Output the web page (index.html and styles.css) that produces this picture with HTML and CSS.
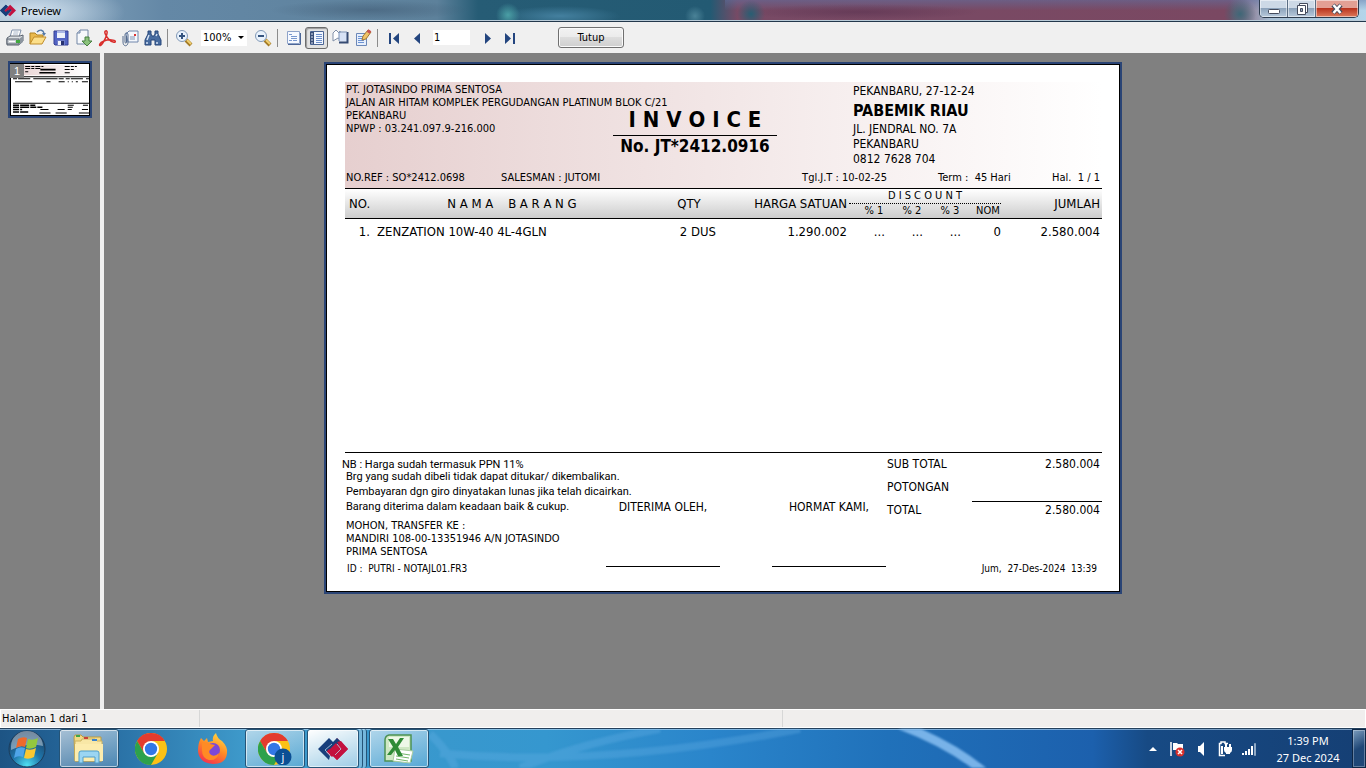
FILE: index.html
```
<!DOCTYPE html>
<html lang="id">
  <head>
    <meta charset="UTF-8" />
    <meta name="viewport" content="width=device-width, initial-scale=1.0" />
    <title>Preview</title>
    <link rel="stylesheet" href="styles.css">
  </head>
  <body>
    <header class="titlebar">
      <svg class="titlebar-logo" width="16" height="13" viewBox="0 0 30 24">
        <path d="M0 12 11 1l4 4-7 7 3 3 8-8 4 4-12 12z" fill="#173f7c" />
        <path d="M30 12 19 23l-4-3 7-8-3-3-8 8-4-4L19 1z" fill="#c3113f" />
        <path d="M11 1l4 4-7 7 3 3 4-4 3 3-7 9L0 12z" fill="#173f7c" />
      </svg>
      <h1 class="titlebar-text">Preview</h1>
      <div class="window-controls">
        <button class="win-btn" aria-label="Minimize">
          <svg width="14" height="12" viewBox="0 0 14 12"><rect x="1.500" y="6.500" width="11" height="4" rx="1" fill="#fff" stroke="#444b5c" /></svg>
        </button>
        <button class="win-btn" aria-label="Restore">
          <svg width="14" height="14" viewBox="0 0 14 14"><path d="M4.500 1.500h8v9h-8z" fill="#fff" stroke="#444b5c" /><path d="M2.500 3.500h8v9h-8z" fill="#fff" stroke="#444b5c" /><path d="M5.500 6.500h2v3h-2z" fill="#8fa5c0" stroke="#444b5c" /></svg>
        </button>
        <button class="win-btn win-close" aria-label="Close">
          <svg width="14" height="12" viewBox="0 0 14 12"><path d="M3 2l8 8M11 2l-8 8" stroke="#444b5c" stroke-width="4.500" /><path d="M3.500 2l7 8M10.500 2l-7 8" stroke="#fff" stroke-width="2.500" /></svg>
        </button>
      </div>
    </header>

    <nav class="toolbar">
      <button class="tool" aria-label="Print">
        <svg width="18" height="18" viewBox="0 0 18 18"><path d="M6 1h9l-2 7H4z" fill="#fff" stroke="#7e8fa8" /><path d="M7.500 3h5M7 5h5" stroke="#a9b6c9" /><path d="M1 9l3-2h10l3-1v6l-4 4H1z" fill="#dce0e4" stroke="#58616d" /><path d="M1 10h12v5H1z" fill="#c8cdd3" stroke="#58616d" /><path d="M13 10l4-3v6l-4 3z" fill="#8c959f" /><path d="M3 12.500h6" stroke="#fff" /><rect x="10" y="11" width="4" height="3" fill="#41a83e" /></svg>
      </button>
      <button class="tool" aria-label="Open">
        <svg width="18" height="18" viewBox="0 0 18 18"><path d="M1 15V4h5l2 2h6v4" fill="#e9b94d" stroke="#b18424" /><path d="M1 15l4-7h12l-4 7z" fill="#fcdf8a" stroke="#c08c2a" /><path d="M8 3c3-3 6-2 7 1" fill="none" stroke="#5178a6" stroke-width="1.300" /><path d="M13 4h4l-2 3z" fill="#5178a6" /></svg>
      </button>
      <button class="tool" aria-label="Save">
        <svg width="18" height="18" viewBox="0 0 18 18"><path d="M2 2h14v14H3l-1-1z" fill="#5264c4" stroke="#343f94" /><path d="M5 2h8v7H5z" fill="#eef2fb" /><path d="M5 2h8v2H5z" fill="#aab7e5" /><path d="M5 11h8v5H5z" fill="#6f7ec9" /><path d="M9 12h3v4H9z" fill="#26306f" /><path d="M6 12h3v4H6z" fill="#f2f4fb" /></svg>
      </button>
      <button class="tool" aria-label="Export">
        <svg width="18" height="18" viewBox="0 0 18 18"><path d="M2 4l3-3h8v14H2z" fill="#f7f9fc" stroke="#7387a5" /><path d="M2 4h3V1" fill="#ccd6e5" stroke="#7387a5" /><path d="M10 8h4v4h3l-5 5-5-5h3z" fill="#8bc27c" stroke="#477f41" /></svg>
      </button>
      <button class="tool" aria-label="Export to PDF">
        <svg width="18" height="18" viewBox="0 0 18 18"><path d="M7.500 2c-2 1 1 6 4 9 2 2 6 3 6 1.500S11 10 6 12s-5 5-3.500 4.500C5 15 10 5 9 2.500 8.600 1.600 8 1.600 7.500 2z" fill="none" stroke="#d92d2b" stroke-width="1.500" /></svg>
      </button>
      <button class="tool" aria-label="Send by e-mail">
        <svg width="18" height="18" viewBox="0 0 18 18"><path d="M5 5l3-3h9v11H7z" fill="#f4f7fc" stroke="#7086ac" /><rect x="13" y="5" width="2" height="2" fill="#d33" /><path d="M9 8h5M9 10h5" stroke="#8495b4" /><path d="M2 7v6c0 5 5 5 5 0V6c0-3-3-3-3 0v7c0 1.500 1.500 1.500 1.500 0V7" fill="none" stroke="#566d8f" /></svg>
      </button>
      <button class="tool" aria-label="Find">
        <svg width="18" height="18" viewBox="0 0 18 18"><path d="M4 2h3v3l1 2h2l1-2V2h3v3l3 6v5h-6v-5H7v5H1v-5l3-6z" fill="#476b9f" stroke="#27477a" /><path d="M3 11l2-5M12 7l1-2M3 13v2M13 13v2" stroke="#d4e2f5" stroke-width="1.500" /></svg>
      </button>
      <span class="separator"></span>
      <button class="tool" aria-label="Zoom in">
        <svg width="18" height="18" viewBox="0 0 18 18"><path d="M11 11l5 5" stroke="#a37a24" stroke-width="4" /><path d="M12 11l4 4" stroke="#f0cf72" stroke-width="2" /><circle cx="7" cy="7" r="5.500" fill="#e9f2fc" stroke="#8199b7" /><path d="M4 7h6M7 4v6" stroke="#35547f" stroke-width="2" /></svg>
      </button>
      <label class="zoom">
        <select class="zoom-select" aria-label="Zoom">
          <option>100%</option>
        </select>
      </label>
      <button class="tool" aria-label="Zoom out">
        <svg width="18" height="18" viewBox="0 0 18 18"><path d="M11 11l5 5" stroke="#a37a24" stroke-width="4" /><path d="M12 11l4 4" stroke="#f0cf72" stroke-width="2" /><circle cx="7" cy="7" r="5.500" fill="#e9f2fc" stroke="#8199b7" /><path d="M4 7h6" stroke="#35547f" stroke-width="2" /></svg>
      </button>
      <span class="separator"></span>
      <button class="tool" aria-label="Outline">
        <svg width="18" height="18" viewBox="0 0 18 18"><path d="M2.500 2.500h12v12h-12z" fill="#f6f9ff" stroke="#8ea3c9" /><path d="M3 15.500h12.500V4" fill="none" stroke="#4c6697" /><path d="M4 5.500h3M6 7.500h6M6 9.500h6M4 11.500h3M8 11.500h4" stroke="#7898cf" /></svg>
      </button>
      <button class="tool tool-pressed" aria-label="Thumbnails">
        <svg width="18" height="18" viewBox="0 0 18 18"><path d="M2.500 2.500h13v13h-13z" fill="#f3f7ff" stroke="#4b6594" /><path d="M2 3h4v12H2z" fill="#3a4f78" /><path d="M3 5h2M3 8h2M3 11h2M3 14h2" stroke="#dce6f6" /><path d="M8 5.500h6M8 7.500h6M8 9.500h6M8 11.500h6M8 13.500h6" stroke="#6e90cb" /></svg>
      </button>
      <button class="tool" aria-label="Page settings">
        <svg width="18" height="18" viewBox="0 0 18 18"><path d="M2 12V4l3-3 3 3 1-2v8L7 9z" fill="#fff" stroke="#8190a8" /><path d="M8 3.500h8v9H8z" fill="#d7e2f6" /><path d="M8 13.500h8.500V3" fill="none" stroke="#364b73" stroke-width="2" /><path d="M8 12V3h8" fill="none" stroke="#7b92b8" /></svg>
      </button>
      <button class="tool" aria-label="Edit page">
        <svg width="18" height="18" viewBox="0 0 18 18"><path d="M2.500 4.500h10v12h-10z" fill="#e7effc" stroke="#6c88b8" /><path d="M4 7.500h6M4 9.500h6M4 11.500h6M4 13.500h6" stroke="#6c93d4" /><path d="M8 11l1-4 5-6 3 2-5 7z" fill="#efc368" stroke="#a47831" /><path d="M13.500 1.500l3 2" stroke="#c75252" stroke-width="3" /></svg>
      </button>
      <span class="separator"></span>
      <button class="tool" aria-label="First page">
        <svg width="18" height="18" viewBox="0 0 18 18"><path d="M4 4h2v11H4zM14 4v11L8 9.500z" fill="#23457f" /></svg>
      </button>
      <button class="tool" aria-label="Previous page">
        <svg width="18" height="18" viewBox="0 0 18 18"><path d="M12 4v11L6 9.500z" fill="#23457f" /></svg>
      </button>
      <input class="page-input" type="text" value="1" aria-label="Page" />
      <button class="tool" aria-label="Next page">
        <svg width="18" height="18" viewBox="0 0 18 18"><path d="M6 4v11l6-5.500z" fill="#23457f" /></svg>
      </button>
      <button class="tool" aria-label="Last page">
        <svg width="18" height="18" viewBox="0 0 18 18"><path d="M3 4v11l6-5.500zM11 4h2v11h-2z" fill="#23457f" /></svg>
      </button>
      <button class="close-preview">Tutup</button>
    </nav>

    <main class="workspace">
      <aside class="thumbs">
        <div class="thumb">
          <svg class="thumb-page" viewBox="0 0 77 50" preserveAspectRatio="none">
            <defs><linearGradient id="tint"><stop stop-color="#e6d0d0" /><stop offset="1" stop-color="#fff" /></linearGradient></defs>
            <rect width="77" height="50" fill="#fff" />
            <rect x="2" y="1" width="73" height="10" fill="url(#tint)" />
            <path d="M2 12.500h75M2 38.500h75" stroke="#000" stroke-width="1" />
            <path d="M2 14.500h75" stroke="#000" stroke-dasharray="4 1 12 3 24 1 5 2" />
            <path d="M4 17.500h17M35 17.500h4M47 17.500h6M56 17.500h1M60 17.500h1M64 17.500h2M70 17.500h6" stroke="#000" />
            <path d="M14 2.500h18M14 4.500h16M14 7.500h3M53 2.500h12M53 5.500h9M53 8.500h5" stroke="#000" stroke-dasharray="5 1 3 1" />
            <path d="M29 5.500h15M28 8.500h16" stroke="#000" stroke-width="1.500" />
            <path d="M2 40.500h22M2 42.500h29M2 44.500h9M2 47h15" stroke="#000" stroke-width="1.500" stroke-dasharray="6 1 9 1" />
            <path d="M56 40.500h6M71 40.500h5M56 42.500h5M46 44.500h7M29 44.500h8M56 44.500h4M70 44.500h6M28 48h11M44 48h11M67 48h10" stroke="#000" />
          </svg>
          <span class="thumb-number">1</span>
        </div>
      </aside>
      <div class="splitter"></div>

      <section class="canvas">
        <article class="paper">
          <header class="inv-head">
            <div class="inv-top">
              <address class="company">
                PT. JOTASINDO PRIMA SENTOSA<br>
                JALAN AIR HITAM KOMPLEK PERGUDANGAN PLATINUM BLOK C/21<br>
                PEKANBARU<br>
                NPWP : 03.241.097.9-216.000
              </address>
              <div class="inv-title">
                <h2 class="inv-name">I N V O I C E</h2>
                <p class="inv-number">No. JT*2412.0916</p>
              </div>
              <div class="customer">
                <p class="customer-date">PEKANBARU, 27-12-24</p>
                <p class="customer-name">PABEMIK RIAU</p>
                <p>JL. JENDRAL NO. 7A</p>
                <p>PEKANBARU</p>
                <p>0812 7628 704</p>
              </div>
            </div>
            <div class="inv-meta">
              <span class="meta-ref">NO.REF : SO*2412.0698</span>
              <span class="meta-sales">SALESMAN : JUTOMI</span>
              <span class="meta-due">Tgl.J.T : 10-02-25</span>
              <span class="meta-term">Term :&nbsp; 45 Hari</span>
              <span>Hal.&nbsp; 1 / 1</span>
            </div>
          </header>

          <table class="items">
            <colgroup>
              <col class="c-no"><col><col class="c-qty"><col class="c-price">
              <col class="c-disc"><col class="c-disc"><col class="c-disc"><col class="c-disc">
              <col class="c-total">
            </colgroup>
            <thead>
              <tr>
                <th rowspan="2" class="left">NO.</th>
                <th rowspan="2">N A M A&nbsp;&nbsp;&nbsp; B A R A N G</th>
                <th rowspan="2">QTY</th>
                <th rowspan="2" class="right">HARGA SATUAN</th>
                <th colspan="4" class="disc-title">D I S C O U N T</th>
                <th rowspan="2" class="right">JUMLAH</th>
              </tr>
              <tr class="disc-row">
                <th>% 1</th>
                <th>% 2</th>
                <th>% 3</th>
                <th>NOM</th>
              </tr>
            </thead>
            <tbody>
              <tr>
                <td class="right">1.</td>
                <td class="item-name">ZENZATION 10W-40 4L-4GLN</td>
                <td class="item-qty">2 DUS</td>
                <td class="right">1.290.002</td>
                <td class="right">...</td>
                <td class="right">...</td>
                <td class="right">...</td>
                <td class="item-nom">0</td>
                <td class="right">2.580.004</td>
              </tr>
            </tbody>
          </table>

          <footer class="inv-foot">
            <div class="foot-grid">
              <div class="notes">
                <p class="note note-nb">NB : Harga sudah termasuk PPN 11%</p>
                <p class="note">Brg yang sudah dibeli tidak dapat ditukar/ dikembalikan.</p>
                <p class="note note-gap">Pembayaran dgn giro dinyatakan lunas jika telah dicairkan.</p>
                <p class="note note-gap">Barang diterima dalam keadaan baik &amp; cukup.</p>
                <p class="transfer">MOHON, TRANSFER KE :<br>MANDIRI 108-00-13351946 A/N JOTASINDO<br>PRIMA SENTOSA</p>
              </div>
              <div class="sign">DITERIMA OLEH,</div>
              <div class="sign">HORMAT KAMI,</div>
              <dl class="totals">
                <div class="total-row"><dt>SUB TOTAL</dt><dd>2.580.004</dd></div>
                <div class="total-row"><dt>POTONGAN</dt><dd></dd></div>
                <div class="total-row"><dt>TOTAL</dt><dd class="grand">2.580.004</dd></div>
              </dl>
            </div>
            <div class="stamp">
              <span>ID :&nbsp; PUTRI - NOTAJL01.FR3</span>
              <span>Jum,&nbsp; 27-Des-2024&nbsp; 13:39</span>
            </div>
          </footer>
        </article>
      </section>
    </main>

    <div class="statusbar">
      <span class="status-page">Halaman 1 dari 1</span>
      <span class="status-mid"></span>
    </div>

    <footer class="taskbar">
      <svg class="taskbar-glow" viewBox="0 0 1366 40" preserveAspectRatio="none">
        <path d="M900-4Q950 15 984 44" fill="none" stroke="#8fc4f5" stroke-width="9" opacity=".8" />
        <path d="M430 5Q450 25 455 40M520 40Q580 15 660 0M440 25Q600 40 800 0" fill="none" stroke="#6ab4e8" stroke-width="8" opacity=".3" />
      </svg>
      <button class="start" aria-label="Start">
        <svg width="38" height="38" viewBox="0 0 38 38">
          <defs>
            <radialGradient id="orb" cx=".5" cy=".95" r=".9"><stop stop-color="#4fe0f2" /><stop offset=".45" stop-color="#1f76ab" /><stop offset="1" stop-color="#1c3f63" /></radialGradient>
          </defs>
          <circle cx="19" cy="19" r="18" fill="url(#orb)" stroke="#1c3c5a" />
          <path d="M3 16a16 15 0 0 1 32 0Q19 12 3 20z" fill="#fff" opacity=".4" />
          <path d="M10 9q5-3 9-1l-2 9q-5-2-9 1z" fill="#ee6a2c" />
          <path d="M20 9q5 2 10-1l-2 9q-6 3-10 1z" fill="#93c83e" />
          <path d="M8 19q4-3 9-1l-2 9q-5-2-9 1z" fill="#4fa5e8" />
          <path d="M18 19q5 2 10-1l-2 9q-5 3-10 1z" fill="#fbc832" />
        </svg>
      </button>
      <button class="task task-open" aria-label="Windows Explorer">
        <svg width="34" height="32" viewBox="0 0 34 32">
          <path d="M2 4l1-2h6l2 2h18v24H3z" fill="#f2d985" stroke="#b89a45" />
          <path d="M4 3h4" stroke="#3fa549" stroke-width="2" /><path d="M10 6h13l2 2h5v20H3V8h6z" fill="#f8e7a6" stroke="#cbb261" />
          <path d="M12 5h4" stroke="#c84238" stroke-width="2" /><path d="M20 7h5" stroke="#3b83cd" stroke-width="2" />
          <path d="M3 11h28v17H3z" fill="#fcecae" />
          <path d="M7 30V20q0-2 2-2h16q2 0 2 2v10h-4v-6H11v6z" fill="#9bd5f2" stroke="#4e9dca" />
        </svg>
      </button>
      <button class="task" aria-label="Chrome">
        <svg width="32" height="32" viewBox="0 0 32 32">
          <circle cx="16" cy="16" r="16" fill="#fbc116" />
          <path d="M2.140 8A16 16 0 0 1 29.860 8H16l-6.930 12z" fill="#e33b2e" />
          <path d="M2.140 8A16 16 0 0 0 16 32l6.930-12-6.930 4-6.930-4z" fill="#2da14c" />
          <circle cx="16" cy="16" r="8" fill="#fff" /><circle cx="16" cy="16" r="6.200" fill="#3277e6" />
        </svg>
      </button>
      <button class="task" aria-label="Firefox">
        <svg width="32" height="32" viewBox="0 0 32 32">
          <defs><linearGradient id="fox" x1=".8" y1="0" x2=".3" y2="1"><stop stop-color="#ffde45" /><stop offset=".5" stop-color="#ff8a25" /><stop offset="1" stop-color="#f5314f" /></linearGradient></defs>
          <path d="M4 5l3 3 3-3 1 4 5-1q-1-5 3-8 1 5 6 8 6 6 5 12-1 11-14 11Q2 30 1 18q0-8 3-13z" fill="url(#fox)" />
          <circle cx="16" cy="17" r="7" fill="#7b48d8" />
          <path d="M5 10q6-2 8 1l5 1-4 4q-3 2-1 5 4 4 9-1-2 8-10 7-7-2-7-10z" fill="#ff8b25" />
        </svg>
      </button>
      <button class="task task-open" aria-label="Chrome, profile j">
        <svg width="34" height="32" viewBox="0 0 34 32">
          <circle cx="16" cy="16" r="16" fill="#fbc116" />
          <path d="M2.140 8A16 16 0 0 1 29.860 8H16l-6.930 12z" fill="#e33b2e" />
          <path d="M2.140 8A16 16 0 0 0 16 32l6.930-12-6.930 4-6.930-4z" fill="#2da14c" />
          <circle cx="16" cy="16" r="8" fill="#fff" /><circle cx="16" cy="16" r="6.200" fill="#3277e6" />
          <circle cx="25" cy="24" r="8.500" fill="#0b4f94" />
          <text x="25" y="28" class="profile-letter">j</text>
        </svg>
      </button>
      <button class="task task-active" aria-label="Preview">
        <svg width="30" height="24" viewBox="0 0 30 24">
          <path d="M30 12 19 23l-4-4-4-1-4-4 8-7 4-6z" fill="#c3113f" />
          <path d="M0 12 11 1l4 4 4-4 4 4-9 9-3-2-3 3 4 4-1 4z" fill="#173f7c" />
          <path d="M19 5l4-1 7 8-11 11-4-4-1 1-5-5 9-9 4 4-5 5 2 2 5-5z" fill="#c3113f" />
          <path d="M14 7l-7 6 5 5M19 7l4 5-6 6" fill="none" stroke="#b9d6ea" stroke-width=".8" />
        </svg>
      </button>
      <span class="task-stack"></span>
      <span class="task-stack"></span>
      <button class="task task-open" aria-label="Excel">
        <svg width="32" height="32" viewBox="0 0 32 32">
          <path d="M6 2h22v26H2V7q0-4 4-5z" fill="#cfe8c4" stroke="#4c9153" stroke-width="1.500" />
          <path d="M6 4h20v10H6z" fill="#eef8e8" />
          <path d="M12 16l18 2-3 12-17-2z" fill="#fff" stroke="#a9cf9f" /><path d="M14 20l13 2M13 23l13 2M13 26l12 2" stroke="#73b56a" />
          <path d="M5 6h5l3 5 4-6h4l-6 9 5 9h-5l-3-6-4 5H4l6-8z" fill="#2f8b36" />
        </svg>
      </button>
      <div class="tray">
        <button class="tray-btn" aria-label="Show hidden icons"><svg width="16" height="16" viewBox="0 0 16 16"><path d="M4 10l4-4 4 4z" fill="#fff" /></svg></button>
        <button class="tray-btn" aria-label="Action Center"><svg width="16" height="16" viewBox="0 0 16 16"><path d="M2 1v14" stroke="#fff" stroke-width="1.500" /><path d="M4 2h4l1 1h5v7H9L8 9H4z" fill="#fff" /><circle cx="11" cy="11" r="4.500" fill="#d9302c" /><path d="M9 9l4 4M13 9l-4 4" stroke="#fff" stroke-width="1.500" /></svg></button>
        <button class="tray-btn" aria-label="Volume"><svg width="16" height="16" viewBox="0 0 16 16"><path d="M5 5h2l4-4v14l-4-4H5z" fill="#fff" /></svg></button>
        <button class="tray-btn" aria-label="Power"><svg width="16" height="16" viewBox="0 0 16 16"><path d="M8 14.500H2.500V2.500H4V1h4v1.500h3" fill="none" stroke="#fff" stroke-width="1.500" /><path d="M4 5h2v8H4z" fill="#fff" /><path d="M7 6h8v3q0 2-2 3v1h-4v-1q-2-1-2-3zM8 3h2v3H8zM12 3h2v3h-2z" fill="#fff" /></svg></button>
        <button class="tray-btn" aria-label="Network"><svg width="16" height="16" viewBox="0 0 16 16"><path d="M1 12h2v2H1zM4 10h2v4H4zM7 8h2v6H7zM10 5h2v9h-2z" fill="#fff" /><path d="M13.500 2.500h1v12h-1z" fill="none" stroke="#90a9c5" /></svg></button>
      </div>
      <time class="clock">1:39 PM<br>27 Dec 2024</time>
      <button class="show-desktop" aria-label="Show desktop"></button>
    </footer>
  </body>
</html>
```

FILE: styles.css
```
* {
  margin: 0;
  padding: 0;
  box-sizing: border-box;
}

body {
  height: 100vh;
  display: flex;
  flex-direction: column;
  overflow: hidden;
  font-family: "DejaVu Sans Condensed", "Noto Sans", sans-serif;
  font-size: 11px;
  color: #000;
  background: #808080;
}

button {
  border: none;
  background: none;
  font: inherit;
  display: flex;
  align-items: center;
  justify-content: center;
}

/* title bar */
.titlebar {
  height: 22px;
  flex: none;
  display: flex;
  align-items: center;
  border-bottom: 1px solid #23384c;
  box-shadow: inset 0 -1px #b9cbd8;
  background:
    radial-gradient(ellipse 90px 30px at 35px 12px, #d3e2ef, transparent),
    radial-gradient(ellipse 100px 10px at 370px 10px, rgba(60, 85, 110, 0.5), transparent),
    radial-gradient(circle 12px at 508px 15px, #4a9fa5, transparent),
    radial-gradient(ellipse 60px 10px at 560px 16px, #44809f, transparent),
    radial-gradient(circle 10px at 695px 16px, #4a8297, transparent),
    radial-gradient(circle 14px at 751px 14px, #285e73, transparent),
    radial-gradient(ellipse 120px 8px at 860px 12px, rgba(90, 50, 80, 0.6), transparent),
    radial-gradient(circle 16px at 1240px 14px, #3e6777, transparent),
    linear-gradient(to bottom, rgba(95, 115, 165, 0.5), transparent 50%) 725px 0 no-repeat,
    linear-gradient(to right, #8fadc6, #6488a6 12%, #5d819b 32%, #265c75 35%, #235a73 52%, #784a65 54%, #7a4862 90%, #a5bdd3 93%, #b3d5ea);
}

.titlebar-logo {
  flex: none;
}

.titlebar-text {
  flex: 1;
  padding-left: 5px;
  font-family: "Noto Sans", sans-serif;
  font-size: 11px;
  font-weight: normal;
}

.window-controls {
  display: flex;
  align-self: flex-start;
  margin-right: 7px;
  border: 1px solid #2d3c4e;
  border-top: none;
  border-radius: 0 0 5px 5px;
  overflow: hidden;
}

.win-btn {
  width: 28px;
  height: 17px;
  border-right: 1px solid #5a6d83;
  box-shadow: inset 0 0 0 1px rgba(255, 255, 255, 0.5);
  background: linear-gradient(#cdd9e6 45%, #8da3bb 50%, #b8cadc);
}

.win-close {
  width: 42px;
  border-right: none;
  background: linear-gradient(#e3a094 45%, #b9351f 50%, #dd7a5c);
}

/* toolbar */
.toolbar {
  height: 31px;
  flex: none;
  display: flex;
  align-items: center;
  padding-left: 3px;
  background: #f0f0f0;
}

.tool {
  width: 23px;
  height: 22px;
  flex: none;
}

.tool-pressed {
  border: 1px solid #6c6c6c;
  border-radius: 3px;
  background: #e2e2e2;
  box-shadow: inset 1px 1px 1px #999;
}

.separator {
  width: 1px;
  height: 18px;
  margin: 0 4px 0 3px;
  background: #8c8c8c;
}

.zoom {
  position: relative;
  margin: 0 4px 0 6px;
}

.zoom::after {
  content: "";
  position: absolute;
  right: 3px;
  top: 6px;
  border: 3px solid transparent;
  border-top-color: #000;
  pointer-events: none;
}

.zoom-select {
  display: block;
  width: 46px;
  height: 16px;
  padding-left: 2px;
  border: none;
  appearance: none;
  background: #fff;
  font: inherit;
}

.page-input {
  width: 37px;
  height: 15px;
  margin: 0 6px 0 5px;
  padding-left: 1px;
  border: none;
  background: #fff;
  font: inherit;
}

.close-preview {
  width: 66px;
  height: 21px;
  margin-left: 36px;
  border: 1px solid #707070;
  border-radius: 3px;
  background: linear-gradient(#f2f2f2, #ebebeb 49%, #dddddd 50%, #cfcfcf);
  box-shadow: inset 0 0 0 1px #fafafa;
}

/* preview area */
.workspace {
  flex: 1;
  display: flex;
  min-height: 0;
}

.thumbs {
  width: 100px;
  padding: 8px;
}

.thumb {
  position: relative;
  height: 57px;
  border: 2px solid #2a4475;
}

.thumb-page {
  display: block;
  width: 100%;
  height: 100%;
  border: 1px solid #000;
}

.thumb-number {
  position: absolute;
  left: 0;
  top: 1px;
  width: 14px;
  background: #808080;
  color: #fff;
  font: 11px/14px "Liberation Sans", Arial, sans-serif;
  text-align: center;
}

.splitter {
  width: 4px;
  background: #f0f0f0;
}

.canvas {
  flex: 1;
  padding: 9px 24px 0 0;
  overflow: hidden;
}

.paper {
  width: 798px;
  min-height: 532px;
  margin: 0 auto;
  padding: 18px 18px 0 19px;
  border: 2px solid #2a4475;
  outline: 1px solid #000;
  outline-offset: -3px;
  background: #fff;
  display: flex;
  flex-direction: column;
}

/* invoice heading */
.inv-head {
  height: 107px;
  display: flex;
  flex-direction: column;
  justify-content: space-between;
  border-bottom: 1px solid #000;
  background: linear-gradient(to right, #e6cfcf, #fff);
}

.inv-top {
  display: flex;
}

.company {
  width: 268px;
  padding: 1px 0 0 1px;
  font-style: normal;
  line-height: 13px;
  white-space: nowrap;
}

.inv-title {
  width: 164px;
  padding-top: 25px;
  text-align: center;
}

.inv-name {
  padding-bottom: 2px;
  border-bottom: 1px solid #000;
  font-size: 22px;
  line-height: 26px;
}

.inv-number {
  font-size: 17px;
  font-weight: bold;
  line-height: 20px;
}

.customer {
  padding-left: 76px;
  font-size: 12px;
  line-height: 15px;
}

.customer-date {
  padding-top: 2px;
}

.customer-name {
  padding-top: 1px;
  font-size: 16px;
  font-weight: bold;
  line-height: 22px;
}

.inv-meta {
  display: flex;
  padding: 0 2px 3px 1px;
  line-height: 14px;
}

.meta-ref {
  width: 155px;
}

.meta-sales {
  flex: 1;
}

.meta-due {
  width: 136px;
}

.meta-term {
  width: 114px;
}

/* items */
.items {
  width: 100%;
  table-layout: fixed;
  border-spacing: 0;
  font-size: 13px;
}

.c-no { width: 27px; }
.c-qty { width: 74px; }
.c-price { width: 123px; }
.c-disc { width: 38px; }
.c-total { width: 101px; }

.items thead {
  background: linear-gradient(#fff, #cbcbcb);
}

.items th {
  height: 15px;
  border-bottom: 1px solid #000;
  font-weight: normal;
  line-height: 14px;
  white-space: nowrap;
}

.items .left {
  padding-left: 4px;
  text-align: left;
}

.items .right {
  padding-right: 2px;
  text-align: right;
}

.items .disc-title {
  border-bottom: 1px dotted #000;
  font-size: 11px;
}

.items .disc-row th {
  padding-left: 12px;
  font-size: 11px;
}

.items td {
  height: 25px;
}

.item-name {
  padding-left: 5px;
}

.item-qty {
  padding-right: 10px;
  text-align: right;
}

.item-nom {
  text-align: right;
}

/* invoice footer */
.inv-foot {
  margin-top: auto;
  padding-bottom: 17px;
  border-top: 1px solid #000;
}

.foot-grid {
  display: flex;
  gap: 52px;
  height: 114px;
}

.notes {
  width: 209px;
  padding: 6px 0 0 1px;
  line-height: 12px;
  white-space: nowrap;
}

.note {
  font-family: Roboto, sans-serif;
}

.note-nb {
  margin-left: -4px;
}

.note-gap {
  padding-top: 3px;
}

.transfer {
  padding-top: 6px;
  line-height: 13px;
}

.sign {
  width: 114px;
  padding-top: 46px;
  border-bottom: 1px solid #000;
  font-size: 12px;
  line-height: 16px;
  text-align: center;
  white-space: nowrap;
}

.totals {
  flex: 1;
  margin-left: -51px;
  font-size: 12px;
}

.total-row {
  display: flex;
  justify-content: space-between;
  line-height: 23px;
}

.total-row dd {
  width: 130px;
  padding-right: 2px;
  text-align: right;
}

.total-row .grand {
  margin-top: 2px;
  border-top: 1px solid #000;
  line-height: 17px;
}

.stamp {
  display: flex;
  justify-content: space-between;
  margin-top: -4px;
  padding: 0 5px 0 2px;
  font-size: 10px;
  line-height: 12px;
}

/* status bar */
.statusbar {
  height: 19px;
  flex: none;
  display: flex;
  border: 1px solid #fff;
  background: #f0eeed;
  line-height: 18px;
}

.status-page {
  width: 199px;
  padding-left: 1px;
  border-right: 1px solid #d7d7d7;
}

.status-mid {
  width: 583px;
  border-right: 1px solid #d7d7d7;
}

/* taskbar */
.taskbar {
  position: relative;
  height: 40px;
  flex: none;
  display: flex;
  align-items: stretch;
  border-top: 1px solid #24405c;
  box-shadow: inset 0 1px rgba(190, 220, 245, 0.6);
  background: linear-gradient(to right, #1d5484, #276ba0 7%, #3e9acb 18%, #3597cf 40%, #2a85cb 52%, #2071ba 65%, #1c60ad 80%, #174a84 84%, #153f74);
}

.taskbar-glow {
  position: absolute;
  width: 100%;
  height: 100%;
  filter: blur(1px);
}

.taskbar button {
  position: relative;
}

.start {
  width: 54px;
  margin-right: 5px;
}

.task {
  width: 60px;
  margin-right: 2px;
}

.task-open,
.task-active {
  border: 1px solid #255477;
  border-radius: 3px;
  box-shadow: inset 0 0 0 1px rgba(255, 255, 255, 0.6);
  background: linear-gradient(160deg, rgba(255, 255, 255, 0.6), rgba(255, 255, 255, 0.15));
}

.task-active {
  width: 52px;
  margin-right: 0;
  background: linear-gradient(160deg, #fff, rgba(255, 255, 255, 0.5));
}

.task-stack {
  width: 4px;
  border-right: 1px solid #255477;
  border-radius: 0 3px 3px 0;
  background: rgba(255, 255, 255, 0.3);
}

.task-stack + .task {
  margin-left: 2px;
}

.profile-letter {
  fill: #fff;
  font: 11px "Noto Sans", sans-serif;
  text-anchor: middle;
}

.tray {
  display: flex;
  margin-left: auto;
}

.tray-btn {
  width: 24px;
}

.clock {
  position: relative;
  width: 88px;
  margin-left: 3px;
  padding-top: 3px;
  color: #fff;
  font: 11px/17px "Noto Sans", sans-serif;
  text-align: center;
}

.show-desktop {
  width: 14px;
  border: 1px solid #0c2646;
  box-shadow: inset 0 0 0 1px rgba(255, 255, 255, 0.3);
  background: linear-gradient(150deg, #7c9dbd, #1f4777 50%);
}
```
